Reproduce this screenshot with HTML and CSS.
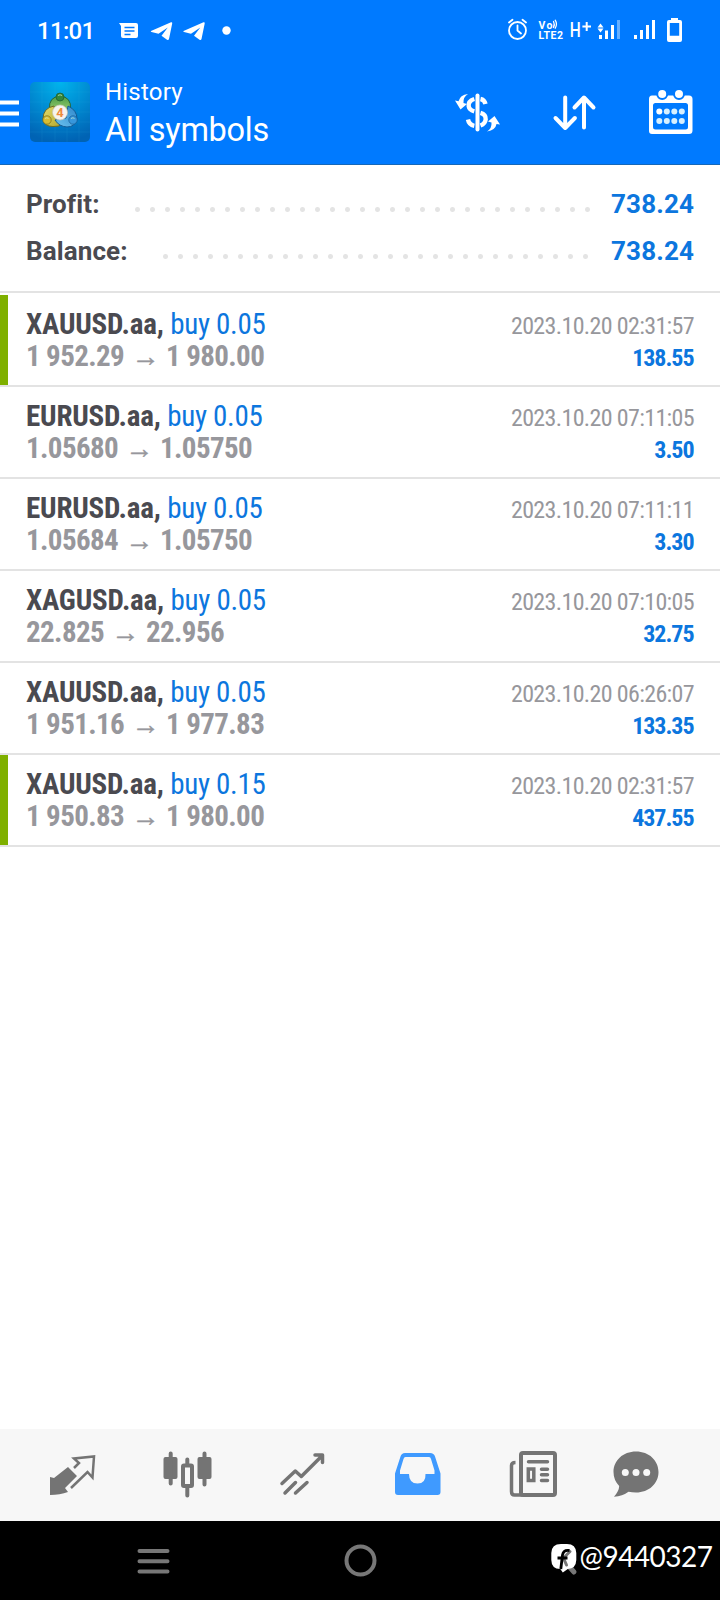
FILE: index.html
```html
<!DOCTYPE html>
<html lang="en">
<head>
<meta charset="utf-8">
<title>History</title>
<link rel="stylesheet" href="styles.css">
</head>
<body>
<div class="screen">
  <header class="top">
    <div class="status">
      <span class="clock">11:01</span>
      <svg class="status-left" width="120" height="30" viewBox="115 15 120 30" fill="#fff">
        <path d="M119 23h17q2 0 2 2v11q0 2-2 2h-13q-2 0-2-2V26z"/>
        <path d="M124.500 27.500h10M124.500 31h10M124.500 34.500h6" stroke="#007aff" stroke-width="1.500" fill="none"/>
        <path d="M151 31 171 22.300q1.400-.4 1.200 1.100L169 39q-.5 1.600-2 .7l-5.500-4 6.300-8.200-9.300 6.300-7-1.900q-1.200-.4-.5-.9z"/>
        <path transform="translate(32.500)" d="M151 31 171 22.300q1.400-.4 1.200 1.100L169 39q-.5 1.600-2 .7l-5.500-4 6.300-8.200-9.300 6.300-7-1.900q-1.200-.4-.5-.9z"/>
        <circle cx="226.500" cy="30.500" r="4.200"/>
      </svg>
      <svg class="status-right" width="180" height="30" viewBox="505 15 180 30" fill="#fff">
        <g fill="none" stroke="#fff" stroke-width="1.800" stroke-linecap="round">
          <circle cx="517.500" cy="30.500" r="8.500"/>
          <path d="M517.500 25.500v5l3.500 3M509 22.500l3.500-2.800M526 22.500l-3.500-2.800"/>
          <path d="M553.500 21.500q1.600 3 0 6M555.200 20.200q2.500 4 0 8" stroke-width="1.300"/>
        </g>
        <text x="538.500" y="28.500" class="t-vo" textLength="14">Vo</text>
        <text x="538.500" y="39" class="t-lte" textLength="24.500">LTE2</text>
        <text x="569.800" y="37" class="t-h" textLength="11" lengthAdjust="spacingAndGlyphs">H</text>
        <path d="M586.700 22v9M582.400 26.500h8.600" stroke="#fff" stroke-width="2"/>
        <path d="M597.500 27.500 600.500 23.500l3 4zM597.500 28.500l3 4 3-4zM599 35h3v4h-3zM605 30.500h3V39h-3zM611 25h3v14h-3z"/>
        <path d="M617 20h3v19h-3z" opacity=".4"/>
        <path d="M634 35h3v4h-3zM640 30h3v9h-3zM646 25h3v14h-3zM652 20h3v19h-3z"/>
        <path fill-rule="evenodd" d="M671 18h7v2h2q2 0 2 2v18q0 2-2 2h-11q-2 0-2-2V22q0-2 2-2h2zM669.800 23v12.800h9.400V23z"/>
      </svg>
    </div>
    <div class="appbar">
      <svg class="menu" width="19" height="27" viewBox="0 0 19 27"><path d="M0 2.500h19M0 13.500h19M0 24.500h19" stroke="#fff" stroke-width="4"/></svg>
      <svg class="logo" width="60" height="60" viewBox="0 0 60 60">
        <defs>
          <radialGradient id="bg" cx=".5" cy="0" r="1"><stop offset="0" stop-color="#00b4ed"/><stop offset=".55" stop-color="#0087cf"/><stop offset="1" stop-color="#0063b4"/></radialGradient>
          <linearGradient id="gr" x1="0" y1="0" x2="0" y2="1"><stop offset="0" stop-color="#4c9c48"/><stop offset="1" stop-color="#9bd06f"/></linearGradient>
          <linearGradient id="ye" x1="0" y1="0" x2="1" y2="1"><stop offset="0" stop-color="#e3dc6a"/><stop offset="1" stop-color="#b3a72f"/></linearGradient>
          <linearGradient id="bl" x1="1" y1="0" x2="0" y2="1"><stop offset="0" stop-color="#2f86cb"/><stop offset="1" stop-color="#6cc4f0"/></linearGradient>
        </defs>
        <rect width="60" height="60" rx="5" fill="url(#bg)"/>
        <path d="M0 10h60M0 20h60M0 30h60M0 40h60M0 50h60M12 0v60M25 0v60M37 0v60M49 0v60" stroke="#3dbbe6" stroke-width=".5" opacity=".22"/>
        <g stroke-linejoin="round">
          <path d="M19.500 27q-1-12 10.500-13 11.500 1 10.500 13l-4 3q-6.500-8-13 0z" fill="url(#gr)" stroke="#23643a"/>
          <path d="M13 37q0-11 11-13l1 9 7 9q-3 3-9 2.500-9 0-10-7.500z" fill="url(#ye)" stroke="#6d6b22"/>
          <path d="M38 24q9 4 9 13-2 8-10 8-8-.5-12-7l11-2z" fill="url(#bl)" stroke="#145c96"/>
          <circle cx="30" cy="15" r="4" fill="#33873c" stroke="#205b2c" stroke-width=".7"/>
          <circle cx="17" cy="38" r="4.200" fill="#d8bd32" stroke="#73691d" stroke-width=".7"/>
          <circle cx="43" cy="38" r="4.200" fill="#3797dc" stroke="#155a92" stroke-width=".7"/>
          <path d="M28 13.500q2-1.500 4 0M15 36.500q2-1.500 3.500 0M41 36.500q2-1.500 3.500 0" fill="none" stroke="#d9f0c8" stroke-width="1" opacity=".7"/>
          <circle cx="30" cy="30.500" r="7.500" fill="#f6f3ee" stroke="#c7c6b8" stroke-width=".7"/>
        </g>
        <text x="30" y="35.200" class="t-four" text-anchor="middle">4</text>
      </svg>
      <div class="titles"><div class="t1">History</div><div class="t2">All symbols</div></div>
      <svg class="actions" width="246" height="50" viewBox="450 87 246 50">
        <g fill="none" stroke="#fff" stroke-linecap="round" stroke-linejoin="round">
          <path d="M477.500 95.500v34" stroke-width="4"/>
          <path d="M474.300 99q-6.300 2-5.600 7.200.5 3.700 5.600 5.200M480.500 99q4 .8 5 5M468 119.500q1 5.300 6.300 6.300M480.500 112.800q5.500 1.500 5.200 6.500-.5 4.500-5.200 6.200" stroke-width="4.400" stroke-linecap="butt"/>
          <path d="M565.200 97.500V128M555.500 118l9.700 10 9.700-10M584 127.500V98M574.500 107.500l9.500-10 9.500 10" stroke-width="4"/>
        </g>
        <path fill="#fff" d="M468 94q-5 3-4.500 9l3.500 1-6.500 5.500-5.500-9 3.500.8Q460 95 468 94zM487 131.500q5-3 4.500-9l-3.500-1 6.500-5.500 5.500 8.500-3.500-.6Q495.500 130 487 131.500z"/>
        <path fill="#fff" fill-rule="evenodd" d="M652 95.500h37q3.500 0 3.500 3.500v31.500q0 3.500-3.500 3.500h-37q-3 0-3-3V99q0-3.500 3-3.500zM655.500 103q-2.500 0-2.500 2.500v21.500q0 2.500 2.500 2.500h30q2.500 0 2.500-2.500v-21.500q0-2.500-2.500-2.500z"/>
        <g fill="#fff" stroke="#007aff" stroke-width="2"><circle cx="662.200" cy="94" r="5"/><circle cx="679" cy="94" r="5"/></g>
        <g fill="#d8f0ff"><circle cx="659.300" cy="111.500" r="3" fill="#fff"/><circle cx="666.800" cy="111.500" r="3"/><circle cx="674.300" cy="111.500" r="3"/><circle cx="681.800" cy="111.500" r="3"/><circle cx="659.300" cy="121" r="3"/><circle cx="666.800" cy="121" r="3"/><circle cx="674.300" cy="121" r="3"/><circle cx="681.800" cy="121" r="3"/></g>
      </svg>
    </div>
  </header>

  <section class="summary">
    <div class="sum"><span class="sum-label">Profit:</span><i class="dots dots-profit"></i><span class="sum-value">738.24</span></div>
    <div class="sum"><span class="sum-label">Balance:</span><i class="dots dots-balance"></i><span class="sum-value">738.24</span></div>
  </section>

  <main class="deals">
    <article class="deal marked"><div class="left"><p class="sym"><b>XAUUSD.aa,</b> <span>buy 0.05</span></p><p class="price">1 952.29<i class="arrow">→</i>1 980.00</p></div><div class="right"><p class="date">2023.10.20 02:31:57</p><p class="gain">138.55</p></div></article>
    <article class="deal"><div class="left"><p class="sym"><b>EURUSD.aa,</b> <span>buy 0.05</span></p><p class="price">1.05680<i class="arrow">→</i>1.05750</p></div><div class="right"><p class="date">2023.10.20 07:11:05</p><p class="gain">3.50</p></div></article>
    <article class="deal"><div class="left"><p class="sym"><b>EURUSD.aa,</b> <span>buy 0.05</span></p><p class="price">1.05684<i class="arrow">→</i>1.05750</p></div><div class="right"><p class="date">2023.10.20 07:11:11</p><p class="gain">3.30</p></div></article>
    <article class="deal"><div class="left"><p class="sym"><b>XAGUSD.aa,</b> <span>buy 0.05</span></p><p class="price">22.825<i class="arrow">→</i>22.956</p></div><div class="right"><p class="date">2023.10.20 07:10:05</p><p class="gain">32.75</p></div></article>
    <article class="deal"><div class="left"><p class="sym"><b>XAUUSD.aa,</b> <span>buy 0.05</span></p><p class="price">1 951.16<i class="arrow">→</i>1 977.83</p></div><div class="right"><p class="date">2023.10.20 06:26:07</p><p class="gain">133.35</p></div></article>
    <article class="deal marked"><div class="left"><p class="sym"><b>XAUUSD.aa,</b> <span>buy 0.15</span></p><p class="price">1 950.83<i class="arrow">→</i>1 980.00</p></div><div class="right"><p class="date">2023.10.20 02:31:57</p><p class="gain">437.55</p></div></article>
  </main>

  <nav class="tabs">
    <svg width="720" height="92" viewBox="0 1429 720 92" fill="none" stroke="#747474">
      <path fill="#747474" stroke="none" d="M68 1467l9 9-12 12 3 4q-8 3-18 3V1477l4 1z"/>
      <path stroke-width="2.500" d="M74 1468l5-5-5-4.500 20-2-1.500 21-5-5.500-16.500 16"/>
      <path fill="#747474" stroke="none" d="M165.500 1457h10q2 0 2 2v18q0 2-2 2h-10q-2 0-2-2v-18q0-2 2-2zM199.500 1457h10q2 0 2 2v18q0 2-2 2h-10q-2 0-2-2v-18q0-2 2-2z"/>
      <path stroke-width="4" stroke-linecap="round" d="M170.700 1453.500v30M204.500 1453.500v31M187.300 1459.500v5M187.300 1487v8.500"/>
      <rect x="183" y="1465.500" width="9" height="20.500" stroke-width="4" rx="1"/>
      <path stroke-width="3.500" stroke-linecap="round" stroke-linejoin="round" d="M282 1483.500l13.300-12.500 6 5.500 21-21M315 1455h7.500v7.500M285 1493l10.500-10.500M295.500 1493l11.500-10.500"/>
      <path fill="#3f9aff" fill-rule="evenodd" stroke="none" d="M405 1453h25q4 0 5 3.500l5.500 17V1492q0 3-3 3H398q-3 0-3-3v-18.500l5.500-17q1-3.500 4.500-3.500zM405.500 1457q-1.500 0-2 2l-3.500 11.500V1474h9q0 9.500 8.500 9.500t8-9.500h9v-3.500l-3.500-11.500q-.5-2-2-2z"/>
      <rect x="521" y="1453" width="34" height="42" rx="2" stroke-width="4"/>
      <path stroke-width="3.500" d="M515.500 1462.500q-4 0-4 3v26q0 3.500 3 3.500h8"/>
      <path stroke-width="3.500" stroke-linecap="round" d="M528.500 1461.800h19M541.500 1469.200h6M541.500 1474.700h6M541.500 1480.500h6"/>
      <rect x="528.300" y="1469" width="5.500" height="11.500" stroke-width="3.500"/>
      <path fill="#747474" stroke="none" d="M636 1451.500c13 0 22.500 9 22.500 20.500s-9.500 20.500-22.500 20.500q-4 0-7.500-.8-6 4.500-14.500 5 5-5.500 5.200-10.700-5.700-6-5.700-14c0-11.500 9.500-20.500 22.500-20.500z"/>
      <g fill="#f7f7f7" stroke="none"><circle cx="625.300" cy="1472.500" r="3.500"/><circle cx="636" cy="1472.500" r="3.500"/><circle cx="646.700" cy="1472.500" r="3.500"/></g>
    </svg>
  </nav>
  <footer class="sysnav">
    <svg width="720" height="79" viewBox="0 1521 720 79" fill="none" stroke="#777" stroke-width="4" stroke-linecap="round">
      <path d="M139.500 1551h28M139.500 1561.300h28M139.500 1571.600h28"/>
      <circle cx="360.500" cy="1560.500" r="14"/>
      <path d="M566 1563l8 9" stroke-width="5"/>
      <path fill="#fff" stroke="none" d="M561 1544h6q9 0 9.300 9v7q-.3 8.500-8.500 9l-5 3.500-2.500-3.500q-8.800 0-9-9v-7q.2-9 9.700-9z"/>
      <path stroke="#777" stroke-width="3" d="M570 1551.500l-6.500 6.500 3 7"/>
      <path stroke="#000" stroke-width="2.800" stroke-linecap="butt" d="M569.500 1550.500q-6-1-7 4.500l-1.700 14M557.500 1558h10"/>
      <text x="579.500" y="1566.500" class="t-handle" textLength="133.500">@9440327</text>
    </svg>
  </footer>
</div>
</body>
</html>
```
FILE: styles.css
```css
* { box-sizing: border-box; }
body { margin: 0; background: #fff; font-family: Roboto, "Liberation Sans", sans-serif; }
p { margin: 0; }
svg { display: block; flex: none; }
.screen { width: 720px; height: 1600px; display: flex; flex-direction: column; overflow: hidden; }

.top { height: 165px; flex: none; background: #007aff; border-bottom: 1px solid #1668b8; color: #fff; }
.status { height: 60px; display: flex; align-items: center; padding-left: 37px; }
.clock { width: 78px; font-size: 24px; font-weight: 500; line-height: 28px; padding-top: 2px; letter-spacing: -0.700px; }
.status-left { margin-right: auto; }
.status-right { margin-right: 35px; }
.t-vo { font: 700 10.500px Roboto; }
.t-lte { font: 700 10.500px Roboto; }
.t-h { font: 500 20px Roboto; }
.t-four { font: 700 13px Roboto; fill: #ee8a3c; }

.appbar { height: 104px; display: flex; align-items: flex-start; }
.menu { margin-top: 40px; }
.logo { margin: 22px 0 0 11px; }
.titles { margin: 18px 0 0 15px; }
.t1 { font-size: 24px; line-height: 28px; letter-spacing: 0.200px; }
.t2 { font-size: 32.500px; line-height: 38px; margin-top: 5px; letter-spacing: -0.300px; }
.actions { margin: 27px 24px 0 auto; }

.summary { height: 128px; flex: none; padding: 16px 26px 0; border-bottom: 2px solid #e3e3e3; }
.sum { height: 47px; display: flex; align-items: center; font-size: 26px; font-weight: 700; line-height: 47px; }
.sum-label { color: #4a4a50; letter-spacing: 0.100px; }
.dots { height: 5px; margin: 9px 0 0 auto; background: radial-gradient(circle at 2.500px 2.500px, #e4e4e4 2px, transparent 3px) 0 0 / 15px 5px; }
.dots-profit { width: 455px; margin-right: 21px; }
.dots-balance { width: 425px; margin-right: 23px; }
.sum-value { width: 83px; text-align: right; color: #0c76de; letter-spacing: 0.150px; }

.deals { flex: 1; padding-top: 2px; }
.deal { height: 92px; display: flex; justify-content: space-between; padding: 13px 26px 0; border-bottom: 2px solid #e3e3e3; font-family: "Roboto Condensed", Roboto, sans-serif; font-stretch: 75%; position: relative; }
.marked::before { content: ""; position: absolute; left: 0; top: 0; width: 7.500px; height: 90px; background: #7fb000; }
.left p { font-size: 29px; line-height: 32px; white-space: nowrap; }
.sym b { color: #4a4a50; letter-spacing: -0.200px; }
.sym span { color: #0c76de; letter-spacing: -0.300px; }
.price { color: #97979c; font-weight: 700; letter-spacing: -0.620px; }
.arrow { display: inline-block; width: 42px; font-style: normal; font-size: 28px; line-height: 20px; text-align: center; -webkit-text-stroke: 0.500px #97979c; }
.right { text-align: right; padding-top: 2px; }
.right p { font-size: 24px; line-height: 32px; white-space: nowrap; }
.date { color: #97979c; letter-spacing: -0.640px; }
.gain { color: #0c76de; font-weight: 700; letter-spacing: -1.050px; padding-right: 0.500px; }

.tabs { height: 92px; flex: none; background: #f7f7f7; }
.sysnav { height: 79px; flex: none; background: #000; }
.t-handle { font: 400 28px Lato; fill: #fff; stroke: none; }
```
